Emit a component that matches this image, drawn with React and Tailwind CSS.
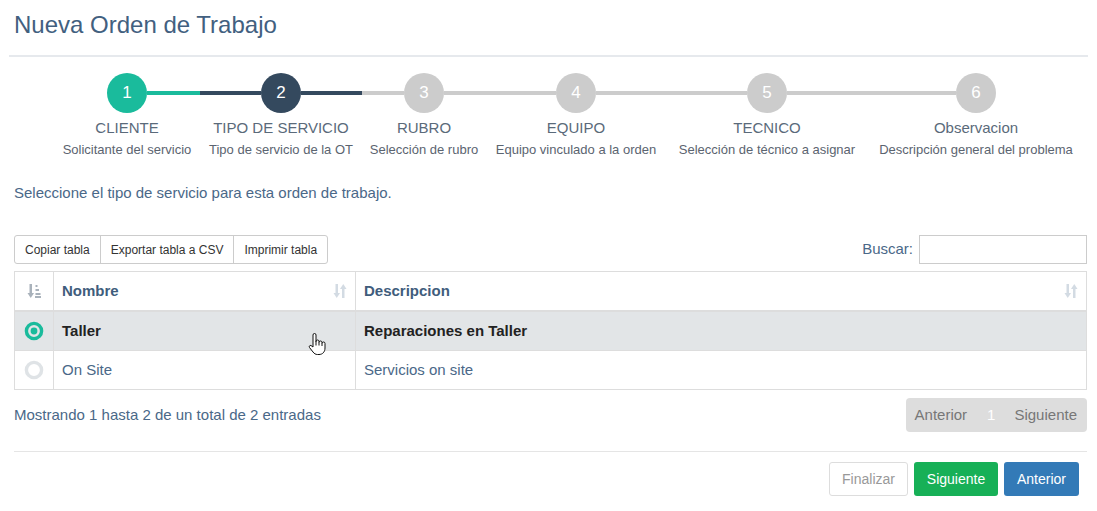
import React from 'react'

const steps = [
  { n: 1, title: 'CLIENTE', sub: 'Solicitante del servicio', w: 'w-[146px]', state: 'done' },
  { n: 2, title: 'TIPO DE SERVICIO', sub: 'Tipo de servicio de la OT', w: 'w-[162px]', state: 'current' },
  { n: 3, title: 'RUBRO', sub: 'Selección de rubro', w: 'w-[124px]', state: 'todo' },
  { n: 4, title: 'EQUIPO', sub: 'Equipo vinculado a la orden', w: 'w-[180px]', state: 'todo' },
  { n: 5, title: 'TECNICO', sub: 'Selección de técnico a asignar', w: 'w-[202px]', state: 'todo' },
  { n: 6, title: 'Observacion', sub: 'Descripción general del problema', w: 'w-[216px]', state: 'todo' },
]

const circleCls = {
  done: 'bg-[#1abb9c]',
  current: 'bg-[#34495e]',
  todo: 'bg-[#cccccc]',
}
const lineCls = {
  done: 'bg-[#1abb9c]',
  current: 'bg-[#34495e]',
  todo: 'bg-[#cccccc]',
}

function Step({ step, first, last }) {
  return (
    <div className={`${step.w} flex flex-col items-center`}>
      <div className="flex items-center w-full">
        <div className={`flex-1 h-[4px] ${first ? '' : lineCls[step.state]}`} />
        <div className={`w-[40px] h-[40px] rounded-full ${circleCls[step.state]} flex items-center justify-center text-white text-[17px]`}>
          {step.n}
        </div>
        <div className={`flex-1 h-[4px] ${last ? '' : lineCls[step.state]}`} />
      </div>
      <div className="mt-[6px] text-[15px] leading-[17px] text-[#5a6a7a] whitespace-nowrap">{step.title}</div>
      <div className="mt-[6px] text-[13px] leading-[15px] text-[#5b6470] whitespace-nowrap">{step.sub}</div>
    </div>
  )
}

function SortBoth() {
  return (
    <svg width="14" height="16" viewBox="0 0 14 16" className="text-[#d3dbe3]" fill="currentColor">
      <rect x="2.5" y="1" width="2.5" height="10" />
      <path d="M0.5 10h6.5L3.75 15z" />
      <rect x="9" y="5" width="2.5" height="10" />
      <path d="M7 6h6.5L10.25 1z" />
    </svg>
  )
}

function SortAmount() {
  return (
    <svg width="14" height="16" viewBox="0 0 14 16" className="text-[#a9b2bb]" fill="currentColor">
      <rect x="2.5" y="1" width="2.5" height="10" />
      <path d="M0.5 10h6.5L3.75 15z" />
      <rect x="8.5" y="2" width="2" height="2" />
      <rect x="8.5" y="6" width="3.5" height="2" />
      <rect x="8.5" y="10" width="5" height="2" />
      <rect x="8" y="13" width="6" height="2" />
    </svg>
  )
}

function Radio({ checked }) {
  return (
    <svg width="20" height="20" viewBox="0 0 20 20">
      <circle cx="10" cy="10" r="7.6" fill="none" stroke={checked ? '#1abb9c' : '#dfe3e6'} strokeWidth="3.4" />
      {checked && <circle cx="10" cy="10" r="3.4" fill="#1abb9c" />}
    </svg>
  )
}

function HandCursor() {
  return (
    <svg width="19" height="25" viewBox="0 0 19 25" className="absolute left-[294px] top-[9px]">
      <path
        d="M5 15V3a1.5 1.5 0 0 1 3 0v7-0.5a1.5 1.5 0 0 1 3 0v1a1.5 1.5 0 0 1 3 0v1a1.5 1.5 0 0 1 3 0V16c0 4-2.5 6.5-6 6.5H9.5c-2 0-3.3-1-4.5-2.5L1.5 15.5c-.8-1 .2-2.5 1.5-2Z"
        fill="#fff"
        stroke="#111"
        strokeWidth="1"
        strokeLinejoin="round"
      />
      <path d="M8 10v3.5M11 10.5v3M14 11.5v2.5" stroke="#111" strokeWidth="1" fill="none" />
    </svg>
  )
}

export default function App() {
  return (
    <div className="w-[1097px] h-[511px] bg-white overflow-hidden font-['Liberation_Sans',Arial,sans-serif]">
      <div className="px-[14px] pt-[10px]">
        <h1 className="text-[24px] leading-[30px] text-[#42607f]">Nueva Orden de Trabajo</h1>
      </div>
      <div className="mx-[9px] mt-[15px] border-t-2 border-[#e6e9ed]" />

      <div className="pl-[14px] pr-[10px]">
        <div className="flex ml-[40px] mt-[16px]">
          {steps.map((s, i) => (
            <Step key={s.n} step={s} first={i === 0} last={i === steps.length - 1} />
          ))}
        </div>

        <p className="mt-[26px] text-[15px] leading-[20px] text-[#4a6888]">
          Seleccione el tipo de servicio para esta orden de trabajo.
        </p>

        <div className="mt-[32px] flex items-center justify-between">
          <div className="flex h-[29px] border border-[#cccccc] rounded-[3px] text-[12px] text-[#333]">
            <div className="px-[10px] flex items-center">Copiar tabla</div>
            <div className="px-[10px] flex items-center border-l border-[#cccccc]">Exportar tabla a CSV</div>
            <div className="px-[10px] flex items-center border-l border-[#cccccc]">Imprimir tabla</div>
          </div>
          <div className="flex items-center">
            <span className="text-[15px] text-[#4a6888] mr-[6px]">Buscar:</span>
            <div className="w-[168px] h-[29px] border border-[#cccccc]" />
          </div>
        </div>

        <div className="relative mt-[7px]">
          <table className="w-full border-collapse text-[15px]">
            <thead>
              <tr className="border-b-2 border-[#dddddd]">
                <th className="w-[39px] h-[39px] border border-[#dddddd] border-b-2">
                  <div className="flex justify-center"><SortAmount /></div>
                </th>
                <th className="w-[302px] border border-[#dddddd] border-b-2 text-left px-[8px]">
                  <div className="flex items-center justify-between">
                    <span className="font-bold text-[#3f5d7c]">Nombre</span>
                    <SortBoth />
                  </div>
                </th>
                <th className="border border-[#dddddd] border-b-2 text-left px-[8px]">
                  <div className="flex items-center justify-between">
                    <span className="font-bold text-[#3f5d7c]">Descripcion</span>
                    <SortBoth />
                  </div>
                </th>
              </tr>
            </thead>
            <tbody>
              <tr className="bg-[#e2e5e7]">
                <td className="h-[40px] border border-[#dddddd]">
                  <div className="flex justify-center"><Radio checked /></div>
                </td>
                <td className="border border-[#dddddd] px-[8px] font-bold text-[#222]">Taller</td>
                <td className="border border-[#dddddd] px-[8px] font-bold text-[#222]">Reparaciones en Taller</td>
              </tr>
              <tr>
                <td className="h-[39px] border border-[#dddddd]">
                  <div className="flex justify-center"><Radio /></div>
                </td>
                <td className="border border-[#dddddd] px-[8px] text-[#4a6888]">On Site</td>
                <td className="border border-[#dddddd] px-[8px] text-[#4a6888]">Servicios on site</td>
              </tr>
            </tbody>
          </table>
          <div className="absolute left-0 top-[52px] w-full h-0">
            <HandCursor />
          </div>
        </div>

        <div className="mt-[8px] flex items-center justify-between">
          <span className="text-[15px] text-[#4a6888]">Mostrando 1 hasta 2 de un total de 2 entradas</span>
          <div className="flex h-[34px] items-center bg-[#dddddd] rounded-[4px] text-[15px] text-[#777]">
            <span className="pl-[9px] pr-[20px]">Anterior</span>
            <span className="text-white">1</span>
            <span className="pl-[19px] pr-[10px]">Siguiente</span>
          </div>
        </div>

        <div className="mt-[19px] border-t border-[#e5e5e5]" />

        <div className="mt-[10px] flex justify-end gap-[6px] mr-[8px] text-[14px]">
          <div className="w-[79px] h-[34px] flex items-center justify-center border border-[#dddddd] rounded-[3px] text-[#999]">Finalizar</div>
          <div className="w-[84px] h-[34px] flex items-center justify-center rounded-[3px] bg-[#17b057] text-white">Siguiente</div>
          <div className="w-[75px] h-[34px] flex items-center justify-center rounded-[3px] bg-[#337ab7] text-white">Anterior</div>
        </div>
      </div>
    </div>
  )
}
